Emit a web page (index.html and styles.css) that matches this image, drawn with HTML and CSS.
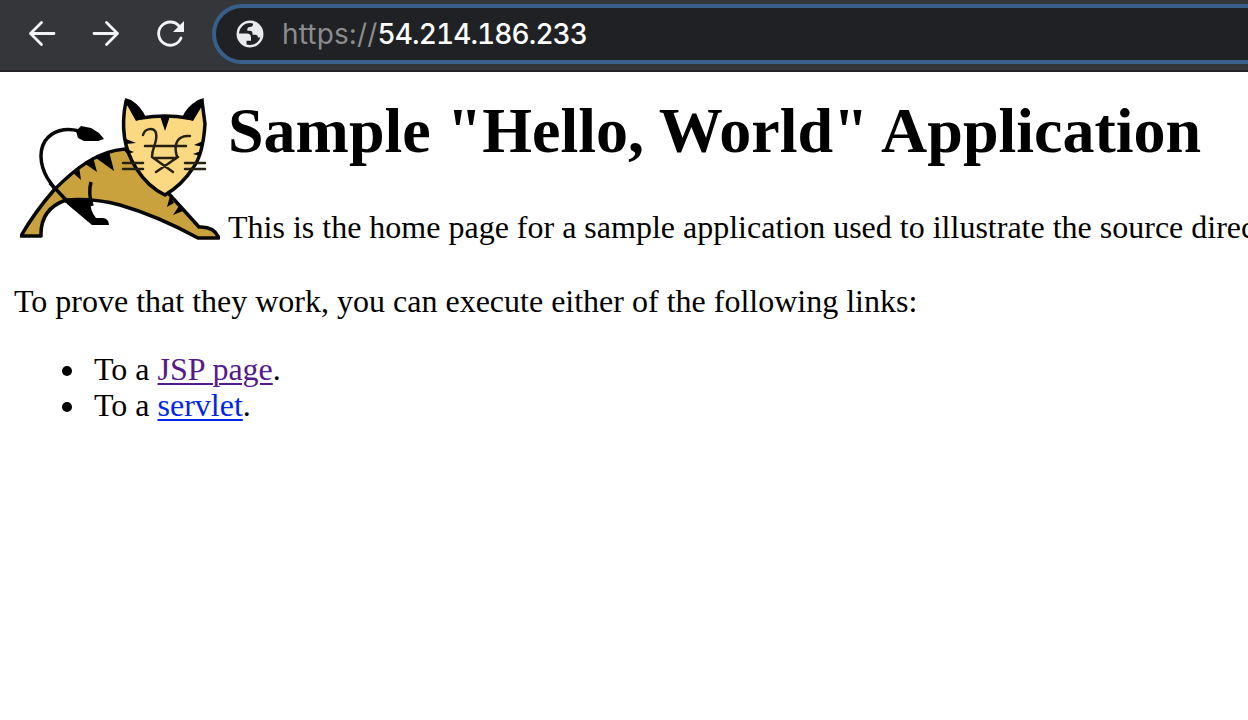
FILE: index.html
```html
<!DOCTYPE html>
<html lang="en">
<head>
<meta charset="utf-8">
<title>Sample "Hello, World" Application</title>
<link rel="stylesheet" href="styles.css">
</head>
<body>
<header class="toolbar">
  <nav class="nav">
    <svg class="icon" viewBox="0 0 32 32"><path d="M28 15.500H4.500M15.500 4.500L4.500 15.500L15.500 26.500"/></svg>
    <svg class="icon" viewBox="0 0 32 32"><path d="M4 15.500H27.500M16.500 4.500L27.500 15.500L16.500 26.500"/></svg>
    <svg class="icon" viewBox="0 0 32 32"><path d="M27 20A11.600 11.600 0 1 1 25 8"/><path class="solid" d="M30 3V14H19Z"/></svg>
  </nav>
  <div class="address">
    <svg class="globe" viewBox="236 20 28 28"><circle cx="250" cy="34" r="12.200"/><path d="M238 33.600H246.500Q251 33.800 251 37.500V40.700H246.500V46Q239 43 238 33.600ZM253 22V25Q252.500 27 250 27Q247.300 27 247.300 29V30.700H250.500Q252.500 31 252.500 33V34.700H255.500Q258 35 258 37.500H261.500Q264 26 253 22Z"/></svg>
    <span class="url"><span class="scheme">https://</span><span class="host">54.214.186.233</span></span>
  </div>
</header>
<main class="page">
  <section class="intro">
    <svg class="cat" viewBox="20 97 200 144" role="img" aria-label="Tomcat">
      <path class="line" d="M79 131C65 127 52 131 45 141C37 154 42 171 50 182Q57 193 67 202"/>
      <path class="ink" d="M76 131L81 126L91 128L99 133L104 139L98 141H84L78 138Z"/>
      <path class="fur line" d="M21 236Q34 213 54 190C75 169 97 151 125 149L170 195L199 227Q214 226 219 238H198Q158 216 120 205Q94 198 66 200Q40 209 41 236Z"/>
      <path class="line" d="M50 183L68 202M91 182Q88 193 92 206"/>
      <path class="ink" d="M65 200H90Q90 211 96 218H103Q109 219 109 225H92L67 204Z"/>
      <path class="ink" d="M72 172L81 180L79 166ZM84 163L97 172L93 157ZM96 158L114 171L109 151ZM170 196L167 207L174 203ZM179 206L173 215L183 211Z"/>
      <path class="face line" d="M126 101L141 118Q165 114 188 118L202 101L205 124Q203 155 193 168Q182 185 165 195Q148 187 136 168Q118 140 126 101Z"/>
      <path class="ink" d="M125 98L131 100Q142 107 146 118L136 121L127 105ZM204 98L198 100Q186 107 182 118L193 121L202 106ZM160 116H170L165 131ZM126 139L136 143L126 144ZM126 149L134 152L128 154ZM203 141L194 145L203 147ZM201 151L193 154L200 156Z"/>
      <path class="thin" d="M143 135C145 128 154 127 156 133C158 142 152 147 152 157M190 136C178 135 173 143 177 157M145 146H186M152 157L173 172M178 157L156 172M155 158H175M123 163H143M123 169H143M185 163H205M185 169H205"/>
    </svg>
    <div class="copy">
      <h1 class="title">Sample "Hello, World" Application</h1>
      <p class="lead">This is the home page for a sample application used to illustrate the source directory</p>
    </div>
  </section>
  <p class="prove">To prove that they work, you can execute either of the following links:</p>
  <ul class="links">
    <li>To a <a class="visited" href="#jsp">JSP page</a>.</li>
    <li>To a <a class="fresh" href="#servlet">servlet</a>.</li>
  </ul>
</main>
</body>
</html>
```
FILE: styles.css
```css
body { margin: 0; background: #fff; color: #000; font: 32px/36px "Liberation Serif", serif; overflow: hidden; }
.toolbar { box-sizing: border-box; height: 72px; padding: 4px 0 6px 26px; display: flex; background: #35363a; border-bottom: 2px solid #252326; overflow: hidden; }
.nav { display: flex; flex: none; align-items: center; gap: 32px; width: 186px; }
.icon { width: 32px; height: 32px; fill: none; stroke: #f1f3f4; stroke-width: 2.8; stroke-linecap: round; stroke-linejoin: round; }
.icon .solid { fill: #f1f3f4; stroke: none; }
.address { box-sizing: border-box; flex: none; width: 1080px; height: 60px; padding-left: 20px; border: 4px solid #36608a; border-radius: 30px; background: #202124; display: flex; align-items: center; gap: 18px; }
.globe { width: 28px; height: 28px; fill: #e8eaed; }
.globe circle { fill: none; stroke: #e8eaed; stroke-width: 2.5; }
.url { color: #fff; font: 28px/40px Inter, sans-serif; white-space: nowrap; }
.scheme { color: #8b8c8e; letter-spacing: 0.15px; }
.host { font-variant-numeric: tabular-nums; font-weight: 500; letter-spacing: -0.9px; }
.page { padding: 25px 0 0 14px; }
.intro { display: flex; height: 144px; padding-left: 6px; }
.cat { flex: none; width: 200px; height: 144px; margin-right: 8px; }
.copy { flex: none; white-space: nowrap; }
.title { margin: -2px 0 0; font-size: 64px; line-height: 72px; }
.lead { margin: 42px 0 0; }
.prove { margin: 42px 0 0; }
.links { margin: 32px 0 0; padding-left: 80px; list-style: none; }
.links li { display: flex; align-items: center; white-space: pre; }
.links li::before { content: ""; width: 10px; height: 10px; margin: 4px 22px 0 -32px; border-radius: 50%; background: #000; }
.links a { text-decoration-thickness: 2px; text-underline-offset: 3px; }
.visited { color: #551a8b; }
.fresh { color: #0026ee; }
.cat .line { stroke: #080808; stroke-width: 3.5; fill: none; stroke-linejoin: round; }
.cat .fur { fill: #c9a23e; }
.cat .face { fill: #fad982; }
.cat .ink { fill: #000; }
.cat .thin { fill: none; stroke: #25200f; stroke-width: 2.5; stroke-linecap: round; }
```
